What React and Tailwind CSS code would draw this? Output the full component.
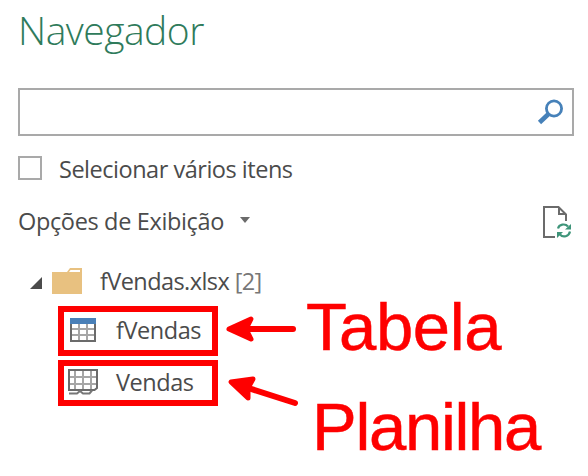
import React from "react";

const SearchIcon = () => (
  <svg width="28" height="28" viewBox="0 0 28 28" fill="none" stroke="#4681b9">
    <circle cx="17" cy="10.500" r="7.600" strokeWidth="2.800" />
    <path d="M11.500 16 L2.500 24.500" strokeWidth="4.600" />
  </svg>
);

const RefreshFileIcon = () => (
  <svg width="30" height="34" viewBox="0 0 30 34" fill="none">
    <path d="M13 32 H2 V2 H16.500 L24 9.500 V16" stroke="#6b6b6b" strokeWidth="2" />
    <path d="M17 2 V9 H24" stroke="#6b6b6b" strokeWidth="2" />
    <g stroke="#3f957a" strokeWidth="2.200">
      <path d="M16 23.500 C17 19.500 23 18 26 21.500" />
      <path d="M28 26.500 C27 31.500 21 33 18 29.500" />
    </g>
    <path d="M29 19 V24.500 H23 Z M15 33 V27 H21 Z" fill="#3f957a" />
  </svg>
);

const FolderIcon = () => (
  <svg width="30" height="26" viewBox="0 0 30 26">
    <path d="M0 4 H15 L18 0 H30 V26 H0 Z" fill="#e8c180" />
    <path d="M18.500 2 H28 V4 H17 Z" fill="#fff" />
  </svg>
);

const TableIcon = () => (
  <svg width="26" height="24" viewBox="0 0 26 24" fill="none">
    <path d="M9 5 V23 M17 5 V23 M1 11 H25 M1 17 H25" stroke="#a6a6a6" strokeWidth="2" />
    <path d="M1 4 V23 H25 V4" stroke="#6b6b6b" strokeWidth="2" />
    <path d="M0 0 H26 V6 H0 Z" fill="#4a80b8" />
  </svg>
);

const SheetIcon = () => (
  <svg width="30" height="26" viewBox="0 0 30 26" fill="none">
    <path
      d="M7 1 V21 M15 1 V21 M23 1 V21 M1 8 H29 M1 15 H29"
      stroke="#a6a6a6"
      strokeWidth="2"
    />
    <path d="M1 22 V1 H29 V19 L26.500 21 H1" stroke="#6b6b6b" strokeWidth="2" />
    <path d="M1 24.500 H9 L12 22 L15 24.500 H21.500 L24 21.500" stroke="#777" strokeWidth="2" />
  </svg>
);

const items = [
  { name: "fVendas", icon: <TableIcon />, box: "h-[50px]" },
  { name: "Vendas", icon: <SheetIcon />, box: "h-[46px]" },
];

const App = () => {
  return (
    <div className="relative w-[588px] h-[476px] overflow-hidden bg-white pl-[18px] pr-[14px] font-['Open_Sans',sans-serif] text-[23.5px] text-[#4b4b4b] whitespace-nowrap">
      <h1 className="h-[88px] pt-[3px] text-[39px] leading-[53px] font-light tracking-[-0.5px] text-[#2f7b5b]">
        Navegador
      </h1>

      {/* Search */}
      <div className="flex items-center justify-end h-[48px] border-2 border-[#a9a9a9] pr-[7px]">
        <SearchIcon />
      </div>

      <div className="flex items-center h-[24px] mt-[20px] gap-[17px]">
        <span className="size-[24px] border-2 border-[#a9a9a9]"></span>
        <span className="mt-[3px] tracking-[-0.48px]">Selecionar vários itens</span>
      </div>

      {/* Display options */}
      <div className="flex items-center h-[34px] mt-[25px]">
        <span className="tracking-[-0.35px]">Opções de Exibição</span>
        <svg width="12" height="7" viewBox="0 0 12 7" className="ml-[15px] -mt-[4px]">
          <path d="M1 0 H11 L6 6 Z" fill="#6b6b6b" />
        </svg>
        <span className="ml-auto mr-[2px]">
          <RefreshFileIcon />
        </span>
      </div>

      {/* Tree */}
      <div className="flex items-center h-[34px] mt-[26px] pl-[12px]">
        <svg width="12" height="12" viewBox="0 0 12 12" className="mt-[2px]">
          <path d="M12 0 V12 H0 Z" fill="#4b4b4b" />
        </svg>
        <span className="ml-[10px] -mt-[3px]">
          <FolderIcon />
        </span>
        <span className="ml-[18px] tracking-[-0.58px]">
          fVendas.xlsx <span className="text-[#777]">[2]</span>
        </span>
      </div>
      <div className="flex flex-col gap-[4px] mt-[7px] ml-[40px]">
        {items.map((item) => (
          <div
            key={item.name}
            className={`flex items-center w-[160px] border-[6px] border-[#fe0000] pl-[4px] ${item.box}`}
          >
            <span className="flex justify-center w-[30px] -mt-[2px]">{item.icon}</span>
            <span className="ml-[18px] tracking-[-0.45px]">{item.name}</span>
          </div>
        ))}
      </div>

      {/* Annotations */}
      <svg
        width="90"
        height="100"
        viewBox="0 0 90 100"
        className="absolute left-[220px] top-[310px]"
        fill="#fe0000"
        stroke="#fe0000"
        strokeLinecap="round"
        strokeLinejoin="round"
      >
        <path d="M20 19 H73" strokeWidth="6" />
        <path d="M9 19 L31 9 L26 19 L31 29 Z" strokeWidth="5" />
        <path d="M25 77 L75 93" strokeWidth="6" />
        <path d="M11 72 L33 69 L28 78 L28 88 Z" strokeWidth="5" />
      </svg>
      <span className="absolute left-[306px] top-[289px] font-['Liberation_Sans',sans-serif] text-[67px] leading-[76px] tracking-[-0.4px] text-[#fe0000] [-webkit-text-stroke:0.5px_#fe0000]">
        Tabela
      </span>
      <span className="absolute left-[312px] top-[389px] font-['Liberation_Sans',sans-serif] text-[67px] leading-[76px] tracking-[-1.3px] text-[#fe0000] [-webkit-text-stroke:0.5px_#fe0000]">
        Planilha
      </span>
    </div>
  );
};

export default App;
